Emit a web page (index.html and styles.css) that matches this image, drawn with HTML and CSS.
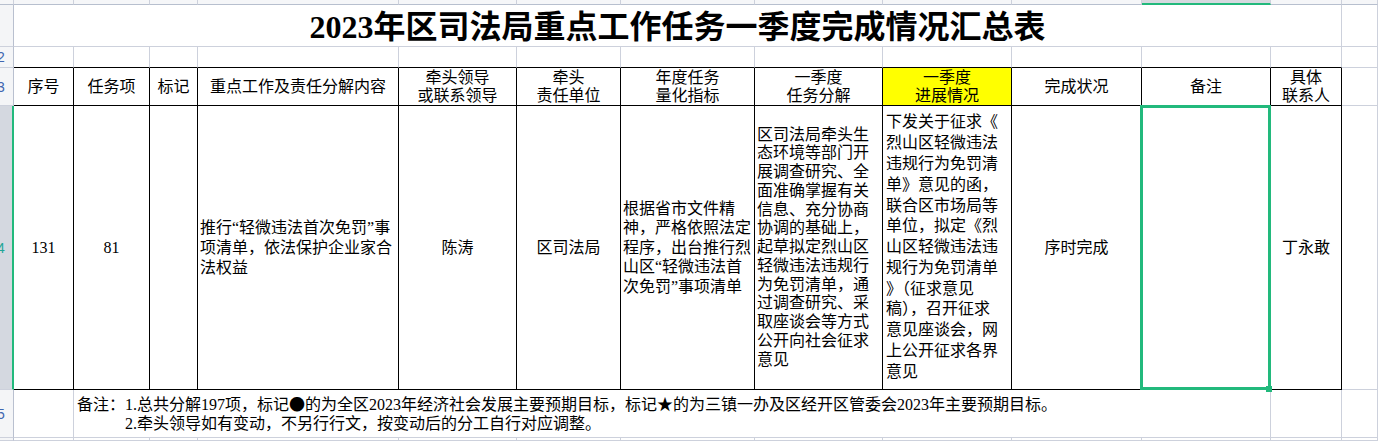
FILE: index.html
```html
<!DOCTYPE html>
<html lang="zh-CN">
<head>
<meta charset="utf-8">
<title>2023年区司法局重点工作任务一季度完成情况汇总表</title>
<link rel="stylesheet" href="styles.css">
</head>
<body>
<div class="sheet">
  <!-- column header strip -->
  <div class="c ch"></div>
  <div class="c ch"></div>
  <div class="c ch"></div>
  <div class="c ch"></div>
  <div class="c ch"></div>
  <div class="c ch"></div>
  <div class="c ch"></div>
  <div class="c ch"></div>
  <div class="c ch"></div>
  <div class="c ch"></div>
  <div class="c ch"></div>
  <div class="c ch ch-sel"></div>
  <div class="c ch"></div>
  <div class="c ch"></div>

  <!-- row 1: title -->
  <div class="c rh"></div>
  <div class="c title">2023年区司法局重点工作任务一季度完成情况汇总表</div>
  <div class="c"></div>

  <!-- row 2: blank -->
  <div class="c rh"><span>2</span></div>
  <div class="c g2"></div>
  <div class="c g2"></div>
  <div class="c g2"></div>
  <div class="c g2"></div>
  <div class="c g2"></div>
  <div class="c g2"></div>
  <div class="c g2"></div>
  <div class="c g2"></div>
  <div class="c g2"></div>
  <div class="c g2"></div>
  <div class="c g2"></div>
  <div class="c g2"></div>
  <div class="c"></div>

  <!-- row 3: headers -->
  <div class="c rh"><span>3</span></div>
  <div class="c h">序号</div>
  <div class="c h">任务项</div>
  <div class="c h">标记</div>
  <div class="c h">重点工作及责任分解内容</div>
  <div class="c h">牵头领导<br>或联系领导</div>
  <div class="c h">牵头<br>责任单位</div>
  <div class="c h">年度任务<br>量化指标</div>
  <div class="c h">一季度<br>任务分解</div>
  <div class="c h yellow">一季度<br>进展情况</div>
  <div class="c h">完成状况</div>
  <div class="c h">备注</div>
  <div class="c h">具体<br>联系人</div>
  <div class="c"></div>

  <!-- row 4: data -->
  <div class="c rh rh-sel"><span>4</span></div>
  <div class="c d">131</div>
  <div class="c d">81</div>
  <div class="c d"></div>
  <div class="c d left lh20">推行&ldquo;轻微违法首次免罚&rdquo;事<br>项清单，依法保护企业家合<br>法权益</div>
  <div class="c d">陈涛</div>
  <div class="c d">区司法局</div>
  <div class="c d left lh195">根据省市文件精<br>神，严格依照法定<br>程序，出台推行烈<br>山区&ldquo;轻微违法首<br>次免罚&rdquo;事项清单</div>
  <div class="c d left lh19">区司法局牵头生<br>态环境等部门开<br>展调查研究、全<br>面准确掌握有关<br>信息、充分协商<br>协调的基础上，<br>起草拟定烈山区<br>轻微违法违规行<br>为免罚清单，通<br>过调查研究、采<br>取座谈会等方式<br>公开向社会征求<br>意见</div>
  <div class="c d left lh21 pl3">下发关于征求《<br>烈山区轻微违法<br>违规行为免罚清<br>单》意见的函，<br>联合区市场局等<br>单位，拟定《烈<br>山区轻微违法违<br>规行为免罚清单<br>》（征求意见<br>稿），召开征求<br>意见座谈会，网<br>上公开征求各界<br>意见</div>
  <div class="c d">序时完成</div>
  <div class="c d sel"></div>
  <div class="c d">丁永敢</div>
  <div class="c"></div>

  <!-- row 5: notes -->
  <div class="c rh"><span>5</span></div>
  <div class="c"></div>
  <div class="c foot">
    <div class="notes">
      <div>备注：1.总共分解197项，标记<span class="sym">●</span>的为全区2023年经济社会发展主要预期目标，标记<span class="sym">★</span>的为三镇一办及区经开区管委会2023年主要预期目标。</div>
      <div class="indent">2.牵头领导如有变动，不另行行文，按变动后的分工自行对应调整。</div>
    </div>
  </div>
  <div class="c"></div>
  <div class="c"></div>

  <!-- row 6 -->
  <div class="c rh"></div>
  <div class="c"></div>
  <div class="c"></div>
  <div class="c"></div>
  <div class="c"></div>
  <div class="c"></div>
  <div class="c"></div>
  <div class="c"></div>
  <div class="c"></div>
  <div class="c"></div>
  <div class="c"></div>
  <div class="c"></div>
  <div class="c"></div>
  <div class="c"></div>
</div>
</body>
</html>
```

FILE: styles.css
```css
* {
  box-sizing: border-box;
  margin: 0;
  padding: 0;
}

html,
body {
  width: 1378px;
  height: 441px;
  overflow: hidden;
  background: #ffffff;
}

body {
  font-family: "Liberation Serif", "Noto Sans CJK SC", serif;
  color: #000000;
}

.sheet {
  display: grid;
  grid-template-columns: 14px 60px 76px 48px 201px 118px 104px 134px 128px 129px 130px 129px 71px 36px;
  grid-template-rows: 5px 42px 21px 38px 284px 48px 3px;
}

.c {
  border-right: 1px solid #cdd1dc;
  border-bottom: 1px solid #cdd1dc;
  display: flex;
  align-items: center;
  justify-content: center;
  text-align: center;
  font-size: 16px;
  line-height: 18px;
  white-space: nowrap;
  overflow: hidden;
}

/* column header strip */
.ch {
  background: #f5f6f8;
  border-bottom-color: #b7bfce;
}

.ch-sel {
  background: #d6d9df;
  border-bottom: 2px solid #22b97c;
}

/* row headers */
.rh {
  background: #f4f5f7;
  border-right-color: #b9c0cf;
  justify-content: flex-start;
  font-family: "Liberation Sans", "Noto Sans", sans-serif;
  font-size: 14px;
  color: #3f66b0;
}

.rh span {
  margin-left: -3px;
}

.rh-sel {
  background: #d4d8e0;
  border-right: 2px solid #22b97c;
  color: #22a596;
}

/* title */
.title {
  grid-column: 2 / 14;
  font-size: 32px;
  line-height: 36px;
  font-weight: 700;
  padding-top: 3px;
}

/* blank row above header */
.g2 {
  border-bottom-color: #000000;
}

/* header row */
.h {
  border-right-color: #000000;
  border-bottom-color: #000000;
}

.yellow {
  background: #ffff00;
}

/* data row */
.d {
  border-right-color: #000000;
  border-bottom-color: #000000;
}

.left {
  justify-content: flex-start;
  text-align: left;
  padding-left: 2px;
}

.pl3 {
  padding-left: 3px;
}

.lh19 {
  line-height: 18.75px;
}

.lh195 {
  line-height: 19.5px;
}

.lh20 {
  line-height: 20px;
}

.lh21 {
  line-height: 20.8px;
}

/* selected cell */
.sel {
  position: relative;
  overflow: visible;
}

.sel::before {
  content: "";
  position: absolute;
  left: -2px;
  right: -1px;
  top: -1px;
  bottom: -1px;
  border: 3px solid #22b97c;
}

.sel::after {
  content: "";
  position: absolute;
  right: -2px;
  bottom: -3px;
  width: 6px;
  height: 6px;
  background: #22b97c;
}

/* notes row */
.foot {
  grid-column: 3 / 13;
  justify-content: flex-start;
  text-align: left;
  padding-left: 3px;
  line-height: 19px;
}

.indent {
  padding-left: 48px;
}

.sym {
  font-family: "Noto Sans CJK SC", sans-serif;
}
```
